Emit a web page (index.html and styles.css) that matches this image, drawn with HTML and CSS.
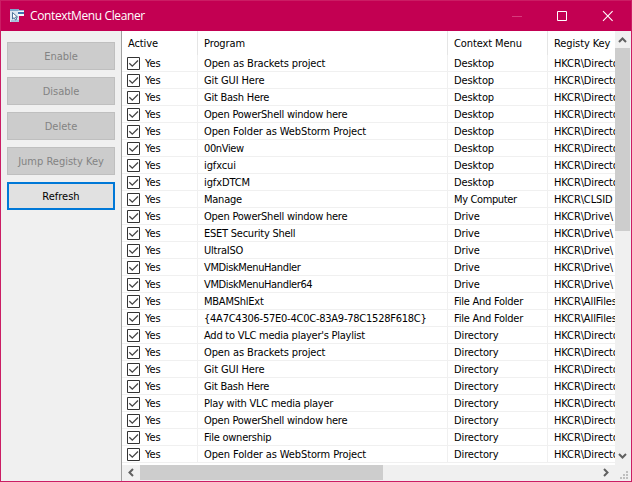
FILE: index.html
```html
<!DOCTYPE html>
<html lang="en">
<head>
<meta charset="utf-8">
<title>ContextMenu Cleaner</title>
<link rel="stylesheet" href="styles.css">
</head>
<body>
<div class="window">
  <header class="titlebar">
    <svg class="app-icon" width="15" height="14" viewBox="0 0 15 14" shape-rendering="crispEdges">
      <path fill="#dce8f2" d="M0 0h9v13H0z"/><path fill="#7fa8cc" d="M0 0h9v2H0z"/>
      <path fill="#f4f8fb" d="M8 1h6v6H8z"/><path fill="#3e72ae" d="M8 3h6v2H8z"/><path fill="#9ab9d6" d="M8 1h6v1H8z"/>
      <path fill="#a9c4dc" d="M1 11h8v2H1z"/>
      <path shape-rendering="auto" fill="#fff" stroke="#3c6590" stroke-width=".9" d="M2.500 3.500v6.500l1.700-1.300 1.300 2.300 1.300-.8-1.300-2.200h2z"/>
    </svg>
    <span class="title">ContextMenu Cleaner</span>
    <svg class="controls" width="110" height="14" viewBox="0 0 110 14" fill="none">
      <path stroke="#d73b7c" d="M1 7.500h10"/>
      <path stroke="#fff" d="M46.500 2.500h9v9h-9z"/>
      <path stroke="#fff" stroke-width="1.100" d="M92 2.200l9.600 9.600M101.600 2.200l-9.600 9.600"/>
    </svg>
  </header>
  <div class="content">
    <aside class="sidebar">
      <button class="button" disabled>Enable</button>
      <button class="button" disabled>Disable</button>
      <button class="button" disabled>Delete</button>
      <button class="button" disabled>Jump Registy Key</button>
      <button class="button primary">Refresh</button>
    </aside>
    <main class="list">
      <div class="view">
        <div class="head"><span>Active</span><span>Program</span><span>Context Menu</span><span>Registy Key</span></div>
        <div class="rows" id="rows"></div>
      </div>
      <div class="vscroll">
        <svg width="16" height="17" viewBox="0 0 16 17"><path class="arrow" d="M4 11l3.500-3.500L11 11"/></svg>
        <div class="vthumb"></div>
        <svg class="end" width="16" height="17" viewBox="0 0 16 17"><path class="arrow" d="M4 6l3.500 3.500L11 6"/></svg>
      </div>
      <div class="hscroll">
        <svg width="18" height="16" viewBox="0 0 18 16"><path class="arrow" d="M11 4L7.500 7.500 11 11"/></svg>
        <div class="hthumb"></div>
        <svg class="end" width="18" height="16" viewBox="0 0 18 16"><path class="arrow" d="M7 4l3.500 3.500L7 11"/></svg>
      </div>
      <svg class="grip" width="16" height="16" viewBox="0 0 16 16" shape-rendering="crispEdges"><path fill="#bfbfbf" d="M11 6h2v2h-2zM8 9h2v2H8zM11 9h2v2h-2zM5 12h2v2H5zM8 12h2v2H8zM11 12h2v2h-2z"/></svg>
    </main>
  </div>
</div>
<script src="rows.js"></script>
</body>
</html>
```
FILE: styles.css
```css
* { box-sizing: border-box; }
body { margin: 0; overflow: hidden; font: 11px/16px "DejaVu Sans Condensed", "DejaVu Sans", sans-serif; font-stretch: condensed; color: #000; }
.window { display: flex; flex-direction: column; width: 632px; height: 482px; border: 1px solid #cb1d64; background: #f0f0f0; }
.titlebar { display: flex; align-items: center; flex: none; height: 30px; padding-left: 9px; background: #c30052; color: #fff; }
.title { margin-left: 5px; font: 12px/18px "Open Sans", sans-serif; letter-spacing: -.38px; white-space: nowrap; }
.controls { margin-left: auto; margin-right: 10px; }
.content { display: flex; flex: 1; min-height: 0; }
.sidebar { display: flex; flex-direction: column; gap: 7px; width: 120px; padding: 11px 6px; }
.button { height: 28px; padding: 1px 0 0; border: 1px solid #bfbfbf; background: #ccc; color: #838383; font: inherit; }
.primary { border: 2px solid #0078d7; background: #e1e1e1; color: #000; }
.list { display: grid; grid-template: 434px 16px / 493px 16px; width: 510px; border-left: 1px solid #a0a0a0; }
.view { overflow: hidden; background: #fff; }
.head, .row { display: grid; grid-template-columns: 76px 250px 100px 90px; width: 516px; white-space: nowrap; }
.head { height: 24px; }
.head span { padding: 5px 0 0 6px; border-right: 1px solid #e5e5e5; letter-spacing: -.1px; }
.row { height: 17px; border-bottom: 1px solid #f0f0f0; }
.row span { display: flex; align-items: center; padding-left: 6px; border-right: 1px solid #f0f0f0; }
.row span:first-child { padding-left: 5px; gap: 5px; }
.row b { position: relative; top: 1px; font-weight: normal; letter-spacing: -.12px; }
.row .snug { letter-spacing: -.24px; }
.row .tight { letter-spacing: -.37px; }
.check { flex: none; width: 13px; height: 13px; }
.vscroll { display: flex; flex-direction: column; }
.vthumb { width: 15px; height: 183px; background: #cdcdcd; }
.vscroll .end { margin-top: auto; }
.hscroll { display: flex; width: 493px; }
.hthumb { width: 243px; height: 15px; background: #cdcdcd; }
.hscroll .end { margin-left: auto; }
.arrow { fill: none; stroke: #606060; stroke-width: 2; }
```
FILE: rows.js
```js
const groups = [
  ["Desktop", "HKCR\\Directory", ["Open as Brackets project", "Git GUI Here", "Git Bash Here", "Open PowerShell window here", "Open Folder as WebStorm Project", "00nView", "igfxcui", "igfxDTCM"]],
  ["My Computer", "HKCR\\CLSID", ["Manage"]],
  ["Drive", "HKCR\\Drive\\", ["Open PowerShell window here", "ESET Security Shell", "UltraISO", "VMDiskMenuHandler", "VMDiskMenuHandler64"]],
  ["File And Folder", "HKCR\\AllFiles", ["MBAMShlExt", "{4A7C4306-57E0-4C0C-83A9-78C1528F618C}"]],
  ["Directory", "HKCR\\Directo", ["Add to VLC media player's Playlist", "Open as Brackets project", "Git GUI Here", "Git Bash Here", "Play with VLC media player", "Open PowerShell window here", "File ownership", "Open Folder as WebStorm Project"]]
];
groups[0][1] = groups[4][1];
const spacing = text =>
  /^(00n|VMD|My C)/.test(text) ? "tight" :
  /^(Git B|Open Po|ESET|UltraISO|MBAM|\{|Add|Play|File|Manage)/.test(text) ? "snug" : "";
const cell = text => `<span><b class="${spacing(text)}">${text}</b></span>`;
const check = '<svg class="check" viewBox="0 0 13 13" fill="none"><path stroke="#333" fill="#fff" d="M.5.5h12v12H.5z"/><path stroke="#444" stroke-width="1.300" d="M2.300 6.200l3 3 5.700-5.700"/></svg>';
document.getElementById("rows").innerHTML = groups.map(([menu, key, names]) => names.map(name =>
  `<div class="row"><span>${check}<b>Yes</b></span>${cell(name)}${cell(menu)}${cell(key)}</div>`).join("")).join("");
```
